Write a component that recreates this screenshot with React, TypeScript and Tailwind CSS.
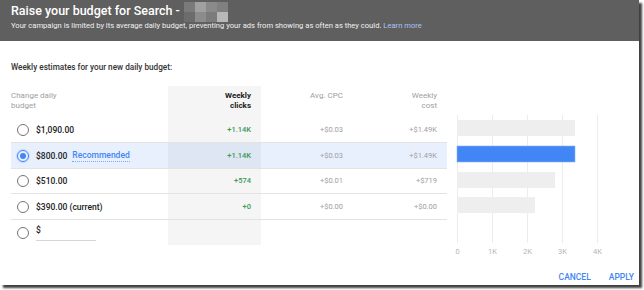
import React from "react";

function Radio({ checked }: { checked?: boolean }) {
  if (checked) {
    return (
      <span className="w-[12px] h-[12px] shrink-0 rounded-full border-[1.5px] border-[#4285f4] flex items-center justify-center shadow-[0_0_0_1px_rgba(66,133,244,0.2)]">
        <span className="w-[6px] h-[6px] rounded-full bg-[#4285f4]" />
      </span>
    );
  }
  return <span className="w-[12px] h-[12px] shrink-0 rounded-full border-[1.5px] border-[#757575]" />;
}

type Row = {
  label: string;
  clicks: string;
  cpc: string;
  cost: string;
  selected?: boolean;
  rec?: boolean;
  h: string;
};

const rows: Row[] = [
  { label: "$1,090.00", clicks: "+1.14K", cpc: "+$0.03", cost: "+$1.49K", h: "h-[25px]" },
  { label: "$800.00", clicks: "+1.14K", cpc: "+$0.03", cost: "+$1.49K", selected: true, rec: true, h: "h-[25px]" },
  { label: "$510.00", clicks: "+574", cpc: "+$0.01", cost: "+$719", h: "h-[24px]" },
  { label: "$390.00 (current)", clicks: "+0", cpc: "+$0.00", cost: "+$0.00", h: "h-[25px]" },
];

const mosaic = [
  "#7a7a7a", "#a0a0a0", "#8a8a8a", "#808080",
  "#6c6c6c", "#8c8c8c", "#7c7c7c", "#b8b8b8",
];

export default function App() {
  return (
    <div className="w-[644px] h-[290px] bg-white [font-family:Roboto,sans-serif]">
      <div className="w-[639px] h-[285px] bg-white flex flex-col shadow-[3px_3px_2px_rgba(0,0,0,0.75)] overflow-hidden">
        <header className="h-[41px] shrink-0 bg-[#5f5f5f] px-[11px] pt-[3px]">
          <div className="flex items-center h-[15px]">
            <span className="text-[12.5px] leading-[15px] font-medium text-white whitespace-nowrap">
              Raise your budget for Search -
            </span>
            <div className="ml-[4px] mt-[2px] grid grid-cols-4">
              {mosaic.map((c, i) => (
                <span key={i} className="block w-[11px] h-[10px]" style={{ backgroundColor: c }} />
              ))}
            </div>
          </div>
          <p className="mt-[3px] text-[7.6px] leading-[9px] text-[#f1f1f1] whitespace-nowrap">
            Your campaign is limited by its average daily budget, preventing your ads from showing as often as they could.{" "}
            <span className="text-[#a9c4f5]">Learn more</span>
          </p>
        </header>

        <div className="pt-[20px] px-[11px] text-[8.2px] leading-[12px] font-medium text-[#333333]">
          Weekly estimates for your new daily budget:
        </div>

        <div className="mt-[13px] flex">
          <div className="ml-[11px] w-[436px] flex flex-col">
            <div className="flex h-[31px] text-[8px] leading-[10px]">
              <div className="w-[157px] pt-[5px] text-[#9e9e9e]">
                Change daily
                <br />
                budget
              </div>
              <div className="w-[93px] pt-[5px] pr-[10px] text-right bg-[#f5f5f5] font-bold text-[#212121]">
                Weekly
                <br />
                clicks
              </div>
              <div className="w-[92px] pt-[5px] pr-[10px] text-right text-[#9e9e9e]">Avg. CPC</div>
              <div className="w-[94px] pt-[5px] pr-[10px] text-right text-[#9e9e9e]">
                Weekly
                <br />
                cost
              </div>
            </div>

            {rows.map((r, i) => (
              <div
                key={i}
                className={`flex ${r.h} box-content border-b border-[#e3e3e3] ${r.selected ? "bg-[#e8f0fe]" : ""}`}
              >
                <div className="w-[157px] pl-[6px] flex items-center">
                  <Radio checked={r.selected} />
                  <span className="ml-[7px] text-[8.5px] leading-[12px] font-medium text-[#212121] whitespace-nowrap">
                    {r.label}
                  </span>
                  {r.rec && (
                    <span className="ml-[5px] text-[8.5px] leading-[11px] font-medium text-[#4285f4] border-b border-dotted border-[#7baaf7]">
                      Recommended
                    </span>
                  )}
                </div>
                <div
                  className={`w-[93px] pr-[10px] flex items-center justify-end text-[7.5px] font-medium text-[#3a9a55] ${
                    r.selected ? "bg-[rgba(0,0,0,0.045)]" : "bg-[#f5f5f5]"
                  }`}
                >
                  {r.clicks}
                </div>
                <div className="w-[92px] pr-[10px] flex items-center justify-end text-[7.5px] text-[#9e9e9e]">
                  {r.cpc}
                </div>
                <div className="w-[94px] pr-[10px] flex items-center justify-end text-[7.5px] text-[#9e9e9e]">
                  {r.cost}
                </div>
              </div>
            ))}

            <div className="flex h-[25px]">
              <div className="w-[157px] pl-[6px] flex items-center">
                <Radio />
                <div className="ml-[7px] w-[60px] pb-[4px] border-b border-[#d6d6d6] text-[8.5px] leading-[12px] font-medium text-[#212121]">
                  $
                </div>
              </div>
              <div className="w-[93px] bg-[#f5f5f5]" />
              <div className="w-[92px]" />
              <div className="w-[94px]" />
            </div>
          </div>

          <svg width="192" height="174" viewBox="0 0 192 174" className="shrink-0">
            {[10.5, 45.5, 80.5, 115.5, 150.5].map((x) => (
              <line key={x} x1={x} y1={29} x2={x} y2={157} stroke="#ececec" strokeWidth={1} />
            ))}
            <rect x={10} y={34} width={118} height={16} fill="#eeeeee" />
            <rect x={10} y={60} width={118} height={16} fill="#4285f4" stroke="#8ab4f8" strokeWidth={0.6} />
            <rect x={10} y={86} width={98} height={16} fill="#eeeeee" />
            <rect x={10} y={111} width={78} height={16} fill="#eeeeee" />
            {[
              ["0", 10.5],
              ["1K", 45.5],
              ["2K", 80.5],
              ["3K", 115.5],
              ["4K", 150.5],
            ].map(([t, x]) => (
              <text
                key={t as string}
                x={x as number}
                y={167.5}
                textAnchor="middle"
                fontSize={7.5}
                fill="#b5b5b5"
                fontFamily="Roboto, sans-serif"
              >
                {t}
              </text>
            ))}
          </svg>
        </div>

        <div className="flex justify-end gap-[18px] pr-[5px] pt-[11px] text-[8.5px] leading-[12px] font-medium text-[#4285f4]">
          <span>CANCEL</span>
          <span>APPLY</span>
        </div>
      </div>
    </div>
  );
}
